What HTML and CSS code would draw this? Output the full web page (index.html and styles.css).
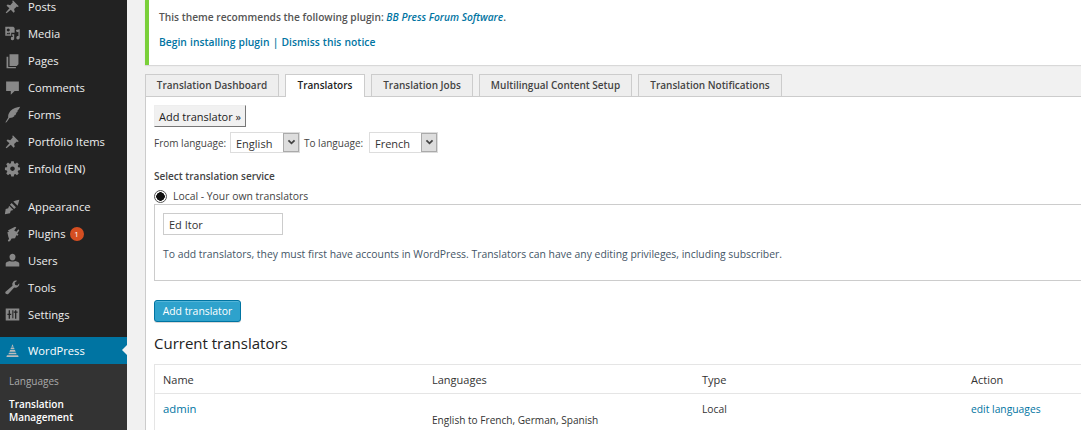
FILE: index.html
```html
<!DOCTYPE html>
<html lang="en">
<head>
<meta charset="utf-8">
<title>Translators</title>
<link rel="stylesheet" href="styles.css">
</head>
<body>
<div class="page">
  <nav class="side">
    <a class="item"><svg class="ic" viewBox="0 0 20 20"><path d="M10.400 2.600l7 7-1.300.9-1-.6-3.200 3 .7 3.200-1.300 1.200-3.300-3.600L3 18l-1-1 4.400-4.800-3.400-3.200 1.200-1.300 3.200.7 3-3.300-.6-1z"/></svg><span>Posts</span></a>
    <a class="item"><svg class="ic" viewBox="0 0 20 20"><path fill-rule="evenodd" d="M1.500 2h9.500l1.500 1.500V9H8.500v3.500H1.500zM5 4a1.800 1.800 0 1 0 .01 0zM3 11h4.500L6 8.500 5 10 4 9zM14 6l4.500-1v10a2 2 0 1 1-1.500-2V8l-2 .5zM9.500 11h2.500v5a2 2 0 1 1-1.500-2v-1.500h-1z"/></svg><span>Media</span></a>
    <a class="item"><svg class="ic" viewBox="0 0 20 20"><path d="M6.500 2.500h10.500v12l-2 2H6.500zM3 5.500h2v12h9v1.500H3z"/></svg><span>Pages</span></a>
    <a class="item"><svg class="ic" viewBox="0 0 20 20"><path d="M2.500 3h15v11h-5l-4.500 4.500V14h-5.500z"/></svg><span>Comments</span></a>
    <a class="item"><svg class="ic" viewBox="0 0 20 20"><path d="M19 1c-1 2-1.500 3-2.500 4l-1 .5.800.5-1.500 2-1.200-.2.900 1-1.300 2-1.500.1.800.8C11 13 9 14 6.500 14L3 19l-1.500.5L5 13.500c-.5-2 .5-5 2.500-7.500C10.500 3 15 1.500 19 1z"/></svg><span>Forms</span></a>
    <a class="item"><svg class="ic" viewBox="0 0 20 20"><path d="M10.400 2.600l7 7-1.300.9-1-.6-3.200 3 .7 3.200-1.300 1.200-3.300-3.600L3 18l-1-1 4.400-4.800-3.400-3.200 1.200-1.300 3.200.7 3-3.300-.6-1z"/></svg><span>Portfolio Items</span></a>
    <a class="item"><svg class="ic" viewBox="0 0 20 20"><path fill-rule="evenodd" d="M8.500 1.500h3l.4 2.200 1.500.6 1.900-1.300 2.100 2.100-1.300 1.900.6 1.500 2.200.4v3l-2.200.4-.6 1.500 1.300 1.900-2.100 2.100-1.900-1.300-1.500.6-.4 2.200h-3l-.4-2.200-1.500-.6-1.900 1.300-2.100-2.100 1.300-1.900-.6-1.500-2.200-.4v-3l2.200-.4.6-1.500-1.300-1.900 2.100-2.100 1.900 1.300 1.500-.6zM10 7.500a2.700 2.700 0 1 0 .01 0z"/></svg><span>Enfold (EN)</span></a>
    <a class="item sep"><svg class="ic" viewBox="0 0 20 20"><path d="M11 4l3-1 4-1-1 4-1 3zM9 6l5 5-2 2-5-5zM6 9l5 5-3 1-1 3-6 1 1-6 3-1z"/></svg><span>Appearance</span></a>
    <a class="item"><svg class="ic" viewBox="0 0 20 20"><path d="M13 2l1.500 1-2.500 3.500 2.500 1.500L17 5l1 1.500-2.500 3.500 1.500 1-1 1.500-1.500-.5-1.500 3.500-4 .5-2 3-2 .5-.5-1.500 1.500-1.500-1-3L4 8.500l2-1-1.500-1z"/></svg><span>Plugins</span><b class="badge">1</b></a>
    <a class="item"><svg class="ic" viewBox="0 0 20 20"><path d="M10 2c2.400 0 3.500 1.800 3.500 4s-1.200 4-3.500 4-3.500-1.800-3.500-4 1.100-4 3.500-4zM2 17v-3.500c0-1 2-2.500 5-3 1 1 5 1 6 0 3 .5 5 2 5 3V17z"/></svg><span>Users</span></a>
    <a class="item"><svg class="ic" viewBox="0 0 20 20"><path d="M18 5a4.500 4.500 0 0 1-6 5l-7 7.500c-1 1-3.500.5-3.500-1.500 0-.5.500-1.300 1-1.500L10 8a4.500 4.500 0 0 1 5.500-6l-3 2.500.7 2.600 2.500.6z"/></svg><span>Tools</span></a>
    <a class="item"><svg class="ic" viewBox="0 0 20 20"><path fill-rule="evenodd" d="M2 3h16v14H2zM5.500 5v4H4v1.500h1.500V15H7v-4.500h1.500V9H7V5zM13 5v1.500h-1.500V8H13v7h1.500V8H16V6.500h-1.500V5zM9.800 5v9.500H11V5z"/></svg><span>Settings</span></a>
    <a class="item current"><svg class="ic" viewBox="0 0 20 20"><path d="M10 2.500l1.300 3H8.700zM8.300 6.500h3.400l.8 2H7.500zM7.100 9.500h5.800l.8 2H6.300zM5.900 12.500h8.200l.8 2H5.100zM3.500 15.500h13l.7 2H2.800z"/></svg><span>WordPress</span></a>
    <div class="sub">
      <a class="sub-link">Languages</a>
      <a class="sub-link active">Translation Management</a>
    </div>
  </nav>

  <main class="main">
    <div class="notice">
      <p class="notice-msg">This theme recommends the following plugin: <a class="em-link">BB Press Forum Software</a>.</p>
      <p class="notice-actions"><a>Begin installing plugin</a> | <a>Dismiss this notice</a></p>
    </div>

    <div class="tabs">
      <a class="tab t1">Translation Dashboard</a>
      <a class="tab on t2">Translators</a>
      <a class="tab t3">Translation Jobs</a>
      <a class="tab t4">Multilingual Content Setup</a>
      <a class="tab t5">Translation Notifications</a>
    </div>

    <section class="panel">
      <button class="legacy">Add translator »</button>
      <div class="langs">
        <label class="l1">From language:</label>
        <div class="sel s1"><span>English</span><i class="arrow"><svg viewBox="0 0 10 8"><path d="M1.500 1.500L5 5l3.500-3.500" /></svg></i></div>
        <label class="l2">To language:</label>
        <div class="sel s2"><span>French</span><i class="arrow"><svg viewBox="0 0 10 8"><path d="M1.500 1.500L5 5l3.500-3.500" /></svg></i></div>
      </div>
      <h4 class="svc">Select translation service</h4>
      <div class="radio-row"><i class="radio"></i><span>Local - Your own translators</span></div>
      <div class="box">
        <input class="name" type="text" value="Ed Itor">
        <p>To add translators, they must first have accounts in WordPress. Translators can have any editing privileges, including subscriber.</p>
      </div>
      <button class="primary">Add translator</button>
      <h3 class="cur">Current translators</h3>
      <div class="table">
        <div class="row head"><span>Name</span><span>Languages</span><span>Type</span><span>Action</span></div>
        <div class="row body"><a class="big">admin</a><span class="lang">English to French, German, Spanish</span><span>Local</span><a>edit languages</a></div>
      </div>
    </section>
  </main>
</div>
</body>
</html>
```
FILE: styles.css
```css
* { box-sizing: border-box; }
html, body { margin: 0; height: 430px; overflow: hidden; }
body { background: #f1f1f1; font-family: "Open Sans", sans-serif; color: #444; width: 1081px; }
a { color: #0074a2; text-decoration: none; }
p { margin: 0; }

.page { display: flex; height: 430px; overflow: hidden; }

.side { width: 127px; flex: none; background: #222; margin-top: -7px; height: 437px; }
.item { display: flex; align-items: center; height: 27px; color: #eee; font-size: 11.200px; position: relative; }
.item.sep { margin-top: 11px; }
.item .ic { width: 17px; height: 17px; margin: 0 7px 0 4px; fill: #888; flex: none; }
.item.current { background: #0074a2; color: #fff; margin-top: 9px; }
.item.current .ic { fill: #bbb; }
.item.current::after { content: ""; position: absolute; right: 0; top: 8px; border: 5px solid transparent; border-right-color: #f1f1f1; border-left-width: 0; }
.badge { margin-left: 4px; width: 14px; height: 14px; border-radius: 50%; background: #d54e21; color: #fff; font-size: 8px; font-weight: 400; text-align: center; line-height: 14px; }
.sub { background: #333; height: 66px; padding: 11px 9px 0; }
.sub-link { display: block; font-size: 10px; line-height: 13px; color: #aaa; margin-bottom: 10px; }
.sub-link.active { color: #fff; font-weight: 600; }

.main { flex: 1; min-width: 0; padding-left: 18px; }

.notice { height: 65px; background: #fff; border-left: 4px solid #7ad03a; box-shadow: 0 1px 1px rgba(0,0,0,.1); padding: 10px 0 0 10px; font-size: 10.200px; font-weight: 600; color: #555; }
.notice-msg { line-height: 14px; }
.em-link { font-style: italic; }
.notice-actions { margin-top: 11px; line-height: 14px; color: #0074a2; font-size: 10.300px; word-spacing: .5px; }

.tabs { display: flex; gap: 6px; margin-top: 9px; height: 22px; }
.tab { display: block; height: 22px; background: #eee; border: 1px solid #ccc; border-bottom: 0; font-size: 10px; font-weight: 600; color: #444; text-align: center; line-height: 20px; }
.tab.on { background: #fff; height: 23px; position: relative; color: #222; }
.t1 { width: 134px; } .t2 { width: 80px; } .t3 { width: 102px; } .t4 { width: 153px; } .t5 { width: 144px; }

.panel { background: #fff; border-top: 1px solid #ccc; border-left: 1px solid #ccc; height: 335px; padding: 8px 0 0 8px; }
.legacy { display: block; width: 92px; height: 22px; padding: 0; background: #f1f1f1; border: 1px solid #eee; border-right-color: #777; border-bottom-color: #777; font: 400 11px "Open Sans", sans-serif; color: #222; }
.langs { display: flex; align-items: center; margin-top: 5px; height: 21px; font-size: 10px; color: #444; }
.l1 { width: 76px; }
.l2 { width: 65px; }
.sel { display: flex; align-items: stretch; height: 21px; border: 1px solid #ddd; font-size: 11px; color: #333; }
.sel span { flex: 1; padding-left: 5px; line-height: 21px; }
.s1 { width: 70px; margin-right: 4px; } .s2 { width: 69px; }
.arrow { width: 16px; background: #ddd; border: 1px solid #aaa; display: flex; align-items: center; justify-content: center; }
.arrow svg { width: 9px; height: 7px; fill: none; stroke: #444; stroke-width: 2; }

.svc { margin: 16px 0 0; font-size: 10px; line-height: 14px; font-weight: 600; color: #444; }
.radio-row { display: flex; align-items: center; height: 14px; margin-top: 6px; font-size: 10.400px; color: #444; }
.radio { width: 13px; height: 13px; border-radius: 50%; border: 1px solid #555; background: radial-gradient(circle, #111 0 4px, #fff 4.500px); margin-right: 6px; }
.box { margin-top: 1px; width: 950px; height: 77px; border: 1px solid #ccc; padding: 8px 0 0 8px; font-size: 10.400px; color: #456; }
.name { display: block; width: 120px; height: 22px; border: 1px solid #ccc; padding: 0 5px; font: 400 11px "Open Sans", sans-serif; color: #333; outline: 0; }
.box p { margin-top: 12px; line-height: 14px; }
.primary { display: block; margin-top: 19px; width: 87px; height: 22px; padding: 0; background: #2ea2cc; border: 1px solid #0074a2; border-radius: 3px; color: #fff; font: 400 10.400px "Open Sans", sans-serif; box-shadow: inset 0 1px 0 rgba(120,200,230,.5), 0 1px 0 rgba(0,0,0,.15); }
.cur { margin: 11px 0 0; font-size: 15px; line-height: 20px; font-weight: 400; color: #222; }
.table { margin-top: 11px; width: 950px; border: 1px solid #e5e5e5; border-width: 1px 1px 0; }
.row { display: grid; grid-template-columns: 269px 270px 269px 1fr; padding-left: 8px; }
.head { height: 29px; padding-top: 1px; align-items: center; font-size: 11px; color: #333; border-bottom: 1px solid #e5e5e5; }
.body { padding-top: 8px; height: 50px; font-size: 10.300px; color: #333; }
.big { font-size: 11.300px; line-height: 13px; }
.lang { margin-top: 11px; font-size: 10.100px; }
```
